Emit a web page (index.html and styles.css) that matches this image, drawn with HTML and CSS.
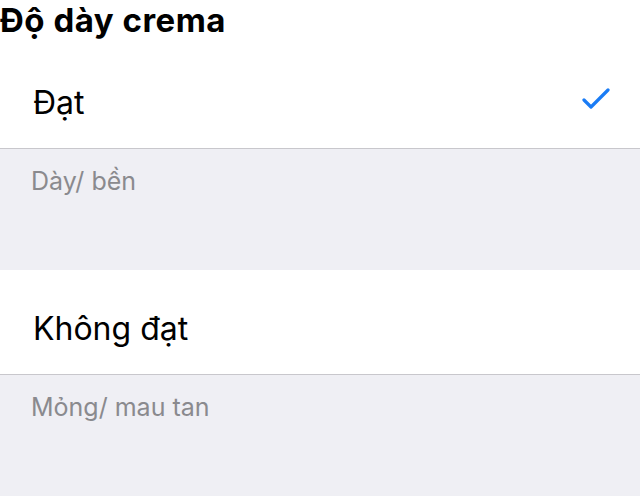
FILE: index.html
```html
<!DOCTYPE html>
<html lang="vi">
<head>
<meta charset="utf-8">
<link rel="stylesheet" href="styles.css">
</head>
<body>
<div class="page">
  <h1 class="title">Độ dày crema</h1>
  <div class="group">
    <div class="row">
      <span class="label">Đạt</span>
      <svg class="check" width="30" height="22" viewBox="0 0 30 22"><path d="M3 12 L10 19 L27 2" fill="none" stroke="#1a7cf5" stroke-width="3.2" stroke-linecap="round" stroke-linejoin="round"/></svg>
    </div>
    <div class="footer">Dày/ bền</div>
  </div>
  <div class="group">
    <div class="row">
      <span class="label">Không đạt</span>
    </div>
    <div class="footer">Mỏng/ mau tan</div>
  </div>
</div>
</body>
</html>
```
FILE: styles.css
```css
html, body {
  margin: 0;
  padding: 0;
  background: #ffffff;
}
body {
  font-family: Inter, "Noto Sans", sans-serif;
  width: 642px;
  height: 498px;
  overflow: hidden;
}
.page {
  width: 640px;
}
.title {
  margin: 0;
  height: 44px;
  font-size: 33px;
  font-weight: 700;
  line-height: 40px;
  letter-spacing: 0.5px;
  color: #000;
}
.row {
  height: 105px;
  display: flex;
  align-items: center;
  justify-content: space-between;
  padding: 12px 29px 0 33px;
  background: #fff;
  border-bottom: 1px solid #c8c7cc;
  box-sizing: border-box;
}
.label {
  font-size: 32px;
  color: #000;
}
.check {
  display: block;
  margin-top: -6px;
}
.footer {
  height: 121px;
  background: #efeff4;
  box-sizing: border-box;
  padding: 17px 31px 0;
  font-size: 25px;
  line-height: 30px;
  color: #8a8a8e;
}
```
